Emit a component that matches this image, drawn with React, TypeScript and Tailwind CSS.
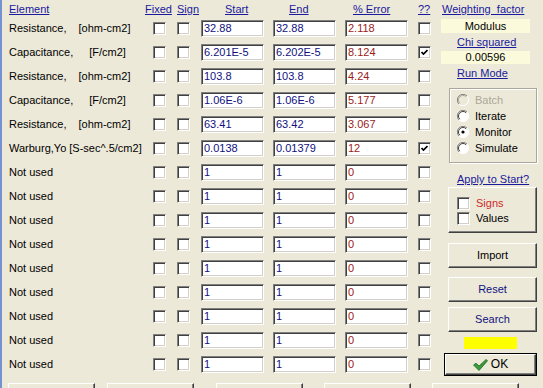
import type { ReactNode } from 'react';

type Row = { name: string; unit?: string; gap?: string; start: string; end: string; err: string; q?: boolean };

const rows: Row[] = [
  { name: 'Resistance,', unit: '[ohm-cm2]', gap: 'ml-[12px]', start: '32.88', end: '32.88', err: '2.118' },
  { name: 'Capacitance,', unit: '[F/cm2]', gap: 'ml-[16px]', start: '6.201E-5', end: '6.202E-5', err: '8.124', q: true },
  { name: 'Resistance,', unit: '[ohm-cm2]', gap: 'ml-[12px]', start: '103.8', end: '103.8', err: '4.24' },
  { name: 'Capacitance,', unit: '[F/cm2]', gap: 'ml-[16px]', start: '1.06E-6', end: '1.06E-6', err: '5.177' },
  { name: 'Resistance,', unit: '[ohm-cm2]', gap: 'ml-[12px]', start: '63.41', end: '63.42', err: '3.067' },
  { name: 'Warburg,Yo', unit: '[S-sec^.5/cm2]', gap: 'ml-[3px]', start: '0.0138', end: '0.01379', err: '12', q: true },
  ...Array.from({ length: 9 }, () => ({ name: 'Not used', start: '1', end: '1', err: '0' })),
];

function Check({ checked = false }: { checked?: boolean }) {
  return (
    <div className="flex h-[13px] w-[13px] shrink-0 items-center justify-center border-t border-l border-t-[#808080] border-l-[#808080] border-b border-r border-b-white border-r-white bg-white shadow-[inset_1px_1px_0_#404040,inset_-1px_-1px_0_#d4d0c8]">
      {checked && (
        <svg width="7" height="7" viewBox="0 0 7 7">
          <path d="M0.5 3 L2.5 5 L6.5 1" fill="none" stroke="#000" strokeWidth="1.7" />
        </svg>
      )}
    </div>
  );
}

function Field({ value, color }: { value: string; color: string }) {
  return (
    <div
      className={`flex h-[17px] w-[63px] shrink-0 items-center overflow-hidden border-t border-l border-t-[#808080] border-l-[#808080] border-b border-r border-b-white border-r-white bg-white pl-[2px] shadow-[inset_1px_1px_0_#404040,inset_-1px_-1px_0_#d4d0c8] ${color}`}
    >
      {value}
    </div>
  );
}

function Radio({ on = false, disabled = false }: { on?: boolean; disabled?: boolean }) {
  return (
    <svg width="12" height="12" viewBox="0 0 12 12" className="shrink-0">
      <circle cx="6" cy="6" r="5.5" fill={disabled ? '#ece9d8' : '#fff'} />
      <path d="M10 2 A5.5 5.5 0 0 0 2 10" fill="none" stroke="#808080" strokeWidth="1" />
      <path d="M9.2 2.8 A4.5 4.5 0 0 0 2.8 9.2" fill="none" stroke={disabled ? '#b0ad9f' : '#404040'} strokeWidth="1" />
      <path d="M2 10 A5.5 5.5 0 0 0 10 2" fill="none" stroke="#fff" strokeWidth="1" />
      {on && <circle cx="6" cy="6" r="1.6" fill="#000" />}
    </svg>
  );
}

function Btn({ children, className }: { children: ReactNode; className: string }) {
  return (
    <div
      className={`ml-[8px] flex h-[25px] w-[89px] items-center justify-center border-t border-l border-t-white border-l-white border-b border-r border-b-[#404040] border-r-[#404040] bg-[#ece9d8] shadow-[inset_-1px_-1px_0_#808080] ${className}`}
    >
      {children}
    </div>
  );
}

function Head({ w, children }: { w: string; children: ReactNode }) {
  return <div className={`${w} shrink-0 text-[#1a1a9e] underline`}>{children}</div>;
}

export default function App() {
  return (
    <div className="h-[388px] w-[543px] overflow-hidden border-l-2 border-[#7591d1] bg-[#ece9d8] font-['Liberation_Sans',Arial,sans-serif] text-[11px] leading-[13px] text-black">
      <div className="flex h-[376px]">
        <div className="w-[438px] shrink-0">
          <div className="flex h-[16px] pt-[3px]">
            <Head w="w-[143px] pl-[7px]">Element</Head>
            <Head w="w-[32px]">Fixed</Head>
            <Head w="w-[48px]">Sign</Head>
            <Head w="w-[64px]">Start</Head>
            <Head w="w-[64px]">End</Head>
            <Head w="w-[65px]">% Error</Head>
            <Head w="w-[14px]">??</Head>
          </div>
          {rows.map((r, i) => (
            <div key={i} className="flex h-[24px] items-center">
              <div className="w-[151px] shrink-0 whitespace-nowrap pl-[7px]">
                {r.name}
                {r.unit && <span className={`inline-block ${r.gap}`}>{r.unit}</span>}
              </div>
              <Check />
              <div className="w-[11px] shrink-0" />
              <Check />
              <div className="w-[11px] shrink-0" />
              <Field value={r.start} color="text-[#101080]" />
              <div className="w-[9px] shrink-0" />
              <Field value={r.end} color="text-[#101080]" />
              <div className="w-[9px] shrink-0" />
              <Field value={r.err} color="text-[#9a1c1c]" />
              <div className="w-[10px] shrink-0" />
              <Check checked={r.q} />
            </div>
          ))}
        </div>

        <div className="flex w-[103px] shrink-0 flex-col">
          <div className="mt-[3px] h-[13px] pl-[2px] text-[#1a1a9e] underline">Weighting&nbsp; factor</div>
          <div className="mt-[3px] ml-[1px] flex h-[14px] w-[89px] items-center justify-center bg-[#fbfbdc]">Modulus</div>
          <div className="mt-[3px] h-[13px] pl-[17px] text-[#1a1a9e] underline">Chi squared</div>
          <div className="mt-[2px] ml-[1px] flex h-[13px] w-[89px] items-center justify-center bg-[#fbfbdc]">0.00596</div>
          <div className="mt-[3px] h-[13px] pl-[17px] text-[#1a1a9e] underline">Run Mode</div>
          <div className="mt-[8px] ml-[9px] h-[75px] w-[88px] border border-[#aca899] pt-[3px] pl-[7px] shadow-[inset_1px_1px_0_#fff,1px_1px_0_#fff]">
            {[
              { t: 'Batch', d: true },
              { t: 'Iterate' },
              { t: 'Monitor', on: true },
              { t: 'Simulate' },
            ].map((o) => (
              <div key={o.t} className="flex h-[16px] items-center gap-[6px]">
                <Radio on={o.on} disabled={o.d} />
                <span className={o.d ? 'text-[#aca899]' : ''}>{o.t}</span>
              </div>
            ))}
          </div>
          <div className="mt-[10px] h-[13px] pl-[17px] text-[#1a1a9e] underline">Apply to Start?</div>
          <div className="mt-[1px] ml-[8px] h-[46px] w-[89px] border-t border-l border-t-white border-l-white border-b border-r border-b-[#404040] border-r-[#404040] pt-[8px] pl-[8px] shadow-[inset_-1px_-1px_0_#808080]">
            <div className="flex h-[15px] items-center gap-[6px]">
              <Check />
              <span className="text-[#cc2a2a]">Signs</span>
            </div>
            <div className="flex h-[15px] items-center gap-[6px]">
              <Check />
              <span>Values</span>
            </div>
          </div>
          <Btn className="mt-[10px]">Import</Btn>
          <Btn className="mt-[9px] text-[#101080]">Reset</Btn>
          <Btn className="mt-[5px] text-[#101080]">Search</Btn>
          <div className="mt-[5px] ml-[24px] h-[12px] w-[53px] bg-[#ffff00]" />
          <div className="mt-[4px] ml-[4px] h-[23px] w-[93px] border border-black">
            <div className="flex h-full items-center justify-center gap-[3px] border-t border-l border-t-white border-l-white border-b border-r border-b-[#404040] border-r-[#404040] shadow-[inset_-1px_-1px_0_#808080]">
              <svg width="15" height="12" viewBox="0 0 15 12">
                <path d="M0.5 6 L3 4.2 L6 7 L13.2 0.4 L14.5 1.8 L6 11.5 Z" fill="#3b9a3b" stroke="#1d6a1d" strokeWidth="0.8" />
              </svg>
              <span className="text-[12px]">OK</span>
            </div>
          </div>
        </div>
      </div>

      <div className="flex pt-[7px]">
        {['ml-[6px]', 'ml-[12px]', 'ml-[22px]', 'ml-[21px]', 'ml-[21px]'].map((m, i) => (
          <div
            key={i}
            className={`${m} h-[20px] w-[87px] shrink-0 border-t border-l border-t-white border-l-white border-r border-r-[#404040] shadow-[inset_-1px_0_0_#808080]`}
          />
        ))}
      </div>
    </div>
  );
}
